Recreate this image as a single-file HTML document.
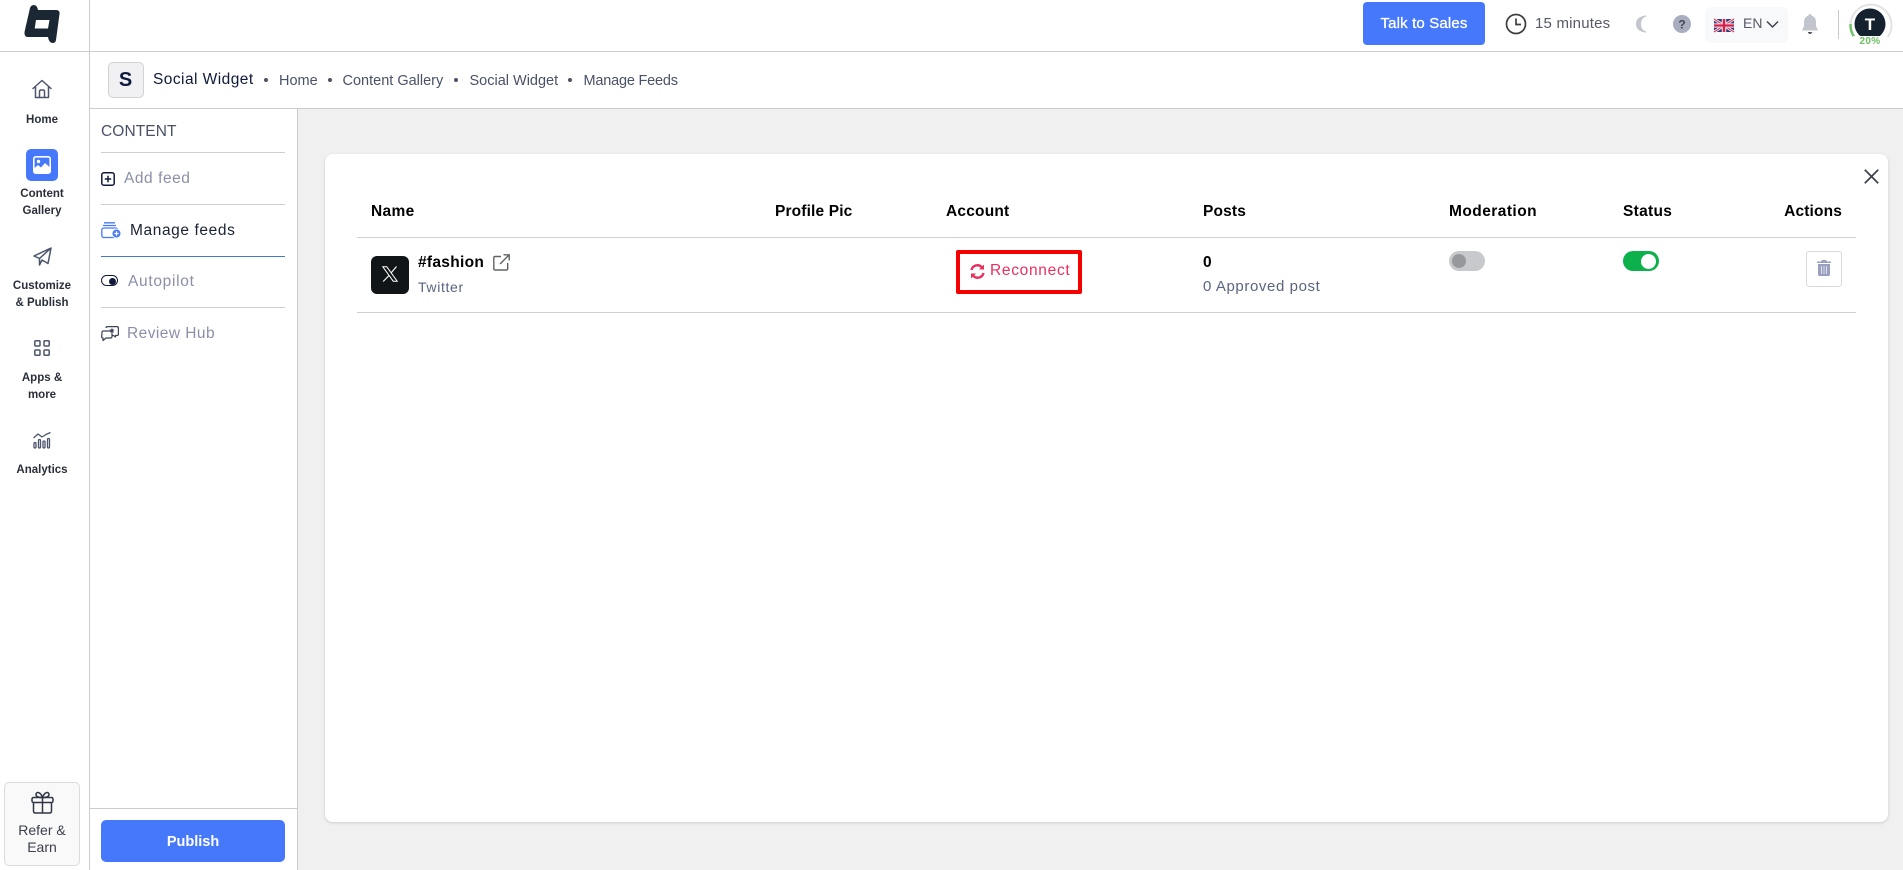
<!DOCTYPE html>
<html><head><meta charset="utf-8"><title>Manage Feeds</title>
<style>
html,body{margin:0;padding:0}
body{width:1903px;height:870px;position:relative;overflow:hidden;background:#f0f0f0;font-family:"Liberation Sans",sans-serif;color:#1a2233}
.a{position:absolute}
.t{position:absolute;white-space:nowrap;line-height:20px}
.c{text-align:center;transform:translateX(-50%)}
.s{font-size:11.5px;font-weight:700;color:#2a2f3a;letter-spacing:0}
.h{font-size:15.5px;font-weight:700;color:#000;letter-spacing:.15px}
.m{font-size:15.5px;color:#8b8fa8;letter-spacing:.55px}
.b{font-size:14.5px;color:#4a5168}
.d{width:4px;height:4px;border-radius:50%;background:#4a5168;position:absolute;top:78px}
.l{position:absolute;height:1px;background:#cfcfcf}
svg{position:absolute;overflow:visible}
</style></head><body>
<div class="a" style="left:0;top:0;width:1903px;height:52px;background:#fff"></div>
<div class="a" style="left:0;top:52px;width:89px;height:818px;background:#fff"></div>
<div class="a" style="left:89px;top:52px;width:1814px;height:56px;background:#fff"></div>
<div class="a" style="left:89px;top:108px;width:208px;height:762px;background:#fff"></div>
<div class="l" style="left:0;top:51px;width:1903px;background:#cccccc"></div>
<div class="a" style="left:89px;top:0;width:1px;height:870px;background:#cccccc"></div>
<div class="l" style="left:89px;top:108px;width:1814px;background:#cccccc"></div>
<div class="a" style="left:297px;top:108px;width:1px;height:762px;background:#cccccc"></div>

<svg style="left:0;top:0" width="89" height="51"><path fill="#1b2733" fill-rule="evenodd" d="M30 8Q31 5 34 5Q37 5 38 10H56Q60 10 59.500 14L56 40Q55.500 43 52.500 43Q49 43 48 37H28Q24 37 24.500 32ZM36 20H49.500L48 28.500H34.700Z"/></svg>

<svg style="left:32px;top:79px" width="20" height="20" viewBox="0 0 20 20" fill="none" stroke="#4b556b" stroke-width="1.500" stroke-linejoin="round" stroke-linecap="round"><path d="M1 9.500L10 1.500L19 9.500M3.500 8V18.500H16.500V8M7.500 18.500V12.500Q7.500 11 9 11H11Q12.500 11 12.500 12.500V18.500"/></svg>
<div class="t s c" style="left:42px;top:110px">Home</div>
<div class="a" style="left:26px;top:149px;width:32px;height:32px;border-radius:5px;background:#4678fb"></div>
<svg style="left:33px;top:156px" width="18" height="18" viewBox="0 0 18 18"><rect x=".8" y=".8" width="16.400" height="16.400" rx="2" fill="none" stroke="#fff" stroke-width="1.600"/><circle cx="5.500" cy="5.500" r="1.700" fill="#fff"/><path fill="#fff" d="M1 15V12.500L5 9L8 11.500L12 7L17 11.500V15Q17 17 15 17H3Q1 17 1 15Z"/></svg>
<div class="t s c" style="left:42px;top:184px">Content</div>
<div class="t s c" style="left:42px;top:201px">Gallery</div>
<svg style="left:33px;top:247px" width="19" height="19" viewBox="0 0 19 19" fill="none" stroke="#4b556b" stroke-width="1.500" stroke-linejoin="round"><path d="M18 1L1 9L6.500 11.500L18 1L15 16.500L9 13L6.500 18V11.500"/></svg>
<div class="t s c" style="left:42px;top:276px">Customize</div>
<div class="t s c" style="left:42px;top:293px">&amp; Publish</div>
<svg style="left:34px;top:340px" width="16" height="16" viewBox="0 0 16 16" fill="none" stroke="#4b556b" stroke-width="1.500"><rect x=".8" y=".8" width="5.200" height="5.200" rx="1"/><rect x="10" y=".8" width="5.200" height="5.200" rx="1"/><rect x=".8" y="10" width="5.200" height="5.200" rx="1"/><rect x="10" y="10" width="5.200" height="5.200" rx="1"/></svg>
<div class="t s c" style="left:42px;top:368px">Apps &amp;</div>
<div class="t s c" style="left:42px;top:385px">more</div>
<svg style="left:33px;top:432px" width="18" height="17" viewBox="0 0 18 17" fill="none" stroke="#4b556b" stroke-width="1.300" stroke-linejoin="round"><path d="M.5 6L5 2L9 5L13 2.500L17.500 .5"/><rect x="1" y="10.500" width="2" height="5.500" rx="1"/><rect x="5.500" y="7.500" width="2" height="8.500" rx="1"/><rect x="10" y="9" width="2" height="7" rx="1"/><rect x="14.500" y="6.500" width="2" height="9.500" rx="1"/></svg>
<div class="t s c" style="left:42px;top:460px">Analytics</div>

<div class="a" style="left:4px;top:782px;width:74px;height:82px;background:#f9f9f9;border:1px solid #dcdcdc;border-radius:5px"></div>
<svg style="left:31px;top:791px" width="23" height="23" viewBox="0 0 23 23" fill="none" stroke="#2f3747" stroke-width="1.500" stroke-linejoin="round"><rect x="1" y="6.500" width="21" height="5" rx="1.500"/><path d="M2.500 11.500V20Q2.500 22 4.500 22H18.500Q20.500 22 20.500 20V11.500M11.500 6.500V22M11.500 6.500C9 6.500 5 6 5 3.500C5 .5 9.500 .5 11.500 6.500C13.500 .5 18 .5 18 3.500C18 6 14 6.500 11.500 6.500Z"/></svg>
<div class="t c" style="left:42px;top:820px;font-size:14px;color:#3b3f4a">Refer &amp;</div>
<div class="t c" style="left:42px;top:837px;font-size:14px;color:#3b3f4a">Earn</div>

<div class="a" style="left:108px;top:62px;width:34px;height:34px;border:1px solid #d2d2d2;border-radius:5px;background:#f1f1f3"></div>
<div class="t c" style="left:125.500px;top:70px;font-size:20px;font-weight:700;color:#0e1a3c">S</div>
<div class="t" style="left:153px;top:70px;font-size:15.500px;color:#0f1a38;letter-spacing:.45px">Social Widget</div>
<div class="d" style="left:264px"></div>
<div class="t b" style="left:279px;top:71px">Home</div>
<div class="d" style="left:328px"></div>
<div class="t b" style="left:342.500px;top:71px">Content Gallery</div>
<div class="d" style="left:454px"></div>
<div class="t b" style="left:469.500px;top:71px">Social Widget</div>
<div class="d" style="left:568px"></div>
<div class="t b" style="left:583.500px;top:71px;letter-spacing:-.2px">Manage Feeds</div>

<div class="t" style="left:101px;top:122px;font-size:15.500px;color:#4a5168;letter-spacing:.1px">CONTENT</div>
<div class="l" style="left:101px;top:152px;width:184px"></div>
<svg style="left:101px;top:172px" width="14" height="14" viewBox="0 0 14 14" fill="none" stroke="#10193a" stroke-width="1.500"><rect x=".8" y=".8" width="12.400" height="12.400" rx="2"/><path d="M7 3.800V10.200M3.800 7H10.200"/></svg>
<div class="t m" style="left:124px;top:169px">Add feed</div>
<div class="l" style="left:101px;top:204px;width:184px"></div>
<svg style="left:101px;top:222px" width="21" height="17" viewBox="0 0 21 17" fill="none" stroke="#4678fb" stroke-width="1.300"><path d="M3 .8H14M2 3.500H15"/><rect x=".8" y="6" width="16" height="9.500" rx="2"/><circle cx="15.500" cy="11.500" r="4.500" fill="#4678fb" stroke="#fff" stroke-width="1"/><path d="M15.500 9.300V13.700M13.300 11.500H17.700" stroke="#fff"/></svg>
<div class="t" style="left:130px;top:221px;font-size:15.500px;color:#1a2233;letter-spacing:.6px">Manage feeds</div>
<div class="l" style="left:101px;top:256px;width:184px;background:#4678c8"></div>
<div class="a" style="left:101px;top:275px;width:15px;height:9px;border:1.500px solid #10193a;border-radius:6px"></div>
<div class="a" style="left:109px;top:277.500px;width:7px;height:7px;border-radius:50%;background:#10193a"></div>
<div class="t m" style="left:128px;top:272px;letter-spacing:.7px">Autopilot</div>
<div class="l" style="left:101px;top:307px;width:184px"></div>
<svg style="left:101px;top:326px" width="18" height="15" viewBox="0 0 18 15" fill="none" stroke="#3b4356" stroke-width="1.200" stroke-linejoin="round"><path d="M5 2Q5 .6 6.500 .6H16Q17.400 .6 17.400 2V8Q17.400 9.500 16 9.500H14.500V11L12.500 9.500H7"/><path d="M1 7Q.6 5 2.500 5H9.500Q11 5 11 6.500V10.500Q11 12 9.500 12H5L2 14.500V12Q.6 12 .6 10.500Z" fill="#fff"/><path d="M11 1.800L11.800 3.500L13.600 3.700L12.300 4.900L12.700 6.700L11 5.800L9.300 6.700L9.700 4.900L8.400 3.700L10.200 3.500Z" fill="#3b4356" stroke="none"/></svg>
<div class="t m" style="left:127px;top:324px;letter-spacing:.45px">Review Hub</div>
<div class="l" style="left:89px;top:808px;width:208px;background:#cccccc"></div>
<div class="a" style="left:101px;top:820px;width:184px;height:42px;border-radius:5px;background:#4678fb"></div>
<div class="t c" style="left:193px;top:832px;font-size:14.500px;font-weight:700;color:#fff">Publish</div>

<div class="a" style="left:1363px;top:2px;width:122px;height:43px;border-radius:4px;background:#4678fb"></div>
<div class="t c" style="left:1424px;top:14px;font-size:15px;color:#fff;letter-spacing:.15px;-webkit-text-stroke:.3px #fff">Talk to Sales</div>
<svg style="left:1505px;top:13px" width="22" height="22" viewBox="0 0 22 22" fill="none" stroke="#3d3d3d" stroke-width="1.700"><circle cx="11" cy="11" r="9.500"/><path d="M11 5.500V11.500H16"/></svg>
<div class="t" style="left:1535px;top:14px;font-size:15px;color:#555a66;letter-spacing:.2px">15 minutes</div>
<svg style="left:1635px;top:15px" width="14" height="18" viewBox="0 0 14 18"><path fill="#c4c7d0" d="M10 .5Q1 2 1 9Q1 16 10 17.500Q11 17.500 12 17Q6 15 6 9Q6 3 12 1Q11 .5 10 .5Z"/></svg>
<svg style="left:1673px;top:15px" width="18" height="18" viewBox="0 0 18 18"><circle cx="9" cy="9" r="9" fill="#a9aebf"/><text x="9" y="13.500" font-family="Liberation Sans" font-size="12" font-weight="700" fill="#3f4558" text-anchor="middle">?</text></svg>
<div class="a" style="left:1705px;top:7px;width:83px;height:36px;border-radius:6px;background:#f7f9fa"></div>
<svg style="left:1714px;top:19px" width="20" height="13" viewBox="0 0 20 14" preserveAspectRatio="none"><rect width="20" height="14" fill="#2b3a7a"/><path d="M0 0L20 14M20 0L0 14" stroke="#f2e6ea" stroke-width="3"/><path d="M0 0L20 14M20 0L0 14" stroke="#d8214a" stroke-width="1"/><path d="M10 0V14M0 7H20" stroke="#f2e6ea" stroke-width="4.500"/><path d="M10 0V14M0 7H20" stroke="#d8214a" stroke-width="2.500"/></svg>
<div class="t" style="left:1743px;top:13px;font-size:14px;color:#555a66">EN</div>
<svg style="left:1766px;top:20px" width="13" height="9" viewBox="0 0 13 9" fill="none" stroke="#3d4250" stroke-width="1.500"><path d="M1 1.500L6.500 7L12 1.500"/></svg>
<svg style="left:1802px;top:14px" width="16" height="21" viewBox="0 0 16 21"><path fill="#c2c5ce" d="M8 0Q9.500 0 9.500 1.500Q14 3 14 8V12L16 16.500H0L2 12V8Q2 3 6.500 1.500Q6.500 0 8 0Z"/><path fill="#4a4f60" d="M5.800 18H10.200Q9.500 20 8 20Q6.500 20 5.800 18Z"/></svg>
<div class="a" style="left:1838px;top:10px;width:1px;height:29px;background:#c9c9c9"></div>
<svg style="left:1846px;top:0" width="50" height="50" viewBox="0 0 50 50" fill="none"><path d="M8.300 37A20.500 20.500 0 1 1 41.700 37" stroke="#e3e3e3" stroke-width="2"/><path d="M8.300 37A20.500 20.500 0 0 1 4.500 24" stroke="#6fc267" stroke-width="2.500"/><circle cx="24" cy="24" r="15.500" fill="#162130"/><text x="24" y="30" font-family="Liberation Sans" font-size="17" font-weight="700" fill="#fff" text-anchor="middle">T</text></svg>
<div class="a" style="left:1853px;top:36px;width:34px;height:14px;background:#fff"></div>
<div class="t c" style="left:1870px;top:32px;font-size:10px;font-weight:700;color:#6cbf63;letter-spacing:.3px">20%</div>

<div class="a" style="left:325px;top:154px;width:1563px;height:668px;background:#fff;border-radius:8px;box-shadow:0 1px 3px rgba(0,0,0,.15)"></div>
<svg style="left:1864px;top:169px" width="15" height="15" viewBox="0 0 15 15" fill="none" stroke="#3f444f" stroke-width="1.800"><path d="M.8 .8L14.200 14.200M14.200 .8L.8 14.200"/></svg>

<div class="t h" style="left:371px;top:202px;letter-spacing:.35px">Name</div>
<div class="t h" style="left:775px;top:202px">Profile Pic</div>
<div class="t h" style="left:946px;top:202px;letter-spacing:.2px">Account</div>
<div class="t h" style="left:1203px;top:202px">Posts</div>
<div class="t h" style="left:1449px;top:202px;letter-spacing:.45px">Moderation</div>
<div class="t h" style="left:1623px;top:202px;letter-spacing:.3px">Status</div>
<div class="t h" style="right:61px;top:202px">Actions</div>
<div class="l" style="left:357px;top:237px;width:1499px"></div>
<div class="l" style="left:357px;top:312px;width:1499px"></div>

<div class="a" style="left:371px;top:256px;width:38px;height:38px;border-radius:6px;background:#111518"></div>
<svg style="left:382px;top:266px" width="16" height="16" viewBox="0 0 16 16" fill="none" stroke="#fff"><path d="M.8 .8H4.800L15.200 15.200H11.200Z" stroke-width="1"/><path d="M14.500 .5L9 7M7 9.500L1.200 15.500" stroke-width="1.100"/></svg>
<div class="t h" style="left:418px;top:253px;letter-spacing:.3px">#fashion</div>
<svg style="left:493px;top:254px" width="17" height="17" viewBox="0 0 17 17" fill="none" stroke="#5f6368" stroke-width="1.400"><path d="M8 2.500H2Q.8 2.500 .8 3.700V14.800Q.8 16 2 16H13.500Q14.700 16 14.700 14.800V9M7 10L16 1M10.500 .8H16.200V6.500"/></svg>
<div class="t" style="left:418px;top:277px;font-size:14px;color:#5a6480;letter-spacing:.65px">Twitter</div>

<div class="a" style="left:956px;top:250px;width:118px;height:36px;border:4px solid #f50000;border-radius:2px"></div>
<svg style="left:970px;top:264px" width="15" height="15" viewBox="0 0 15 15" fill="none" stroke="#e8305f" stroke-width="2.400"><path d="M1.500 6A6 6 0 0 1 12 3.500M13.500 9A6 6 0 0 1 3 11.500"/><path d="M14 .5V5.500H9L14 .5ZM1 14.500V9.500H6L1 14.500Z" fill="#e8305f" stroke="none"/></svg>
<div class="t" style="left:990px;top:261px;font-size:15.500px;color:#e8305f;letter-spacing:.7px">Reconnect</div>

<div class="t h" style="left:1203px;top:253px">0</div>
<div class="t" style="left:1203px;top:276.500px;font-size:15px;color:#5a6480;letter-spacing:.6px">0 Approved post</div>

<div class="a" style="left:1449px;top:251px;width:36px;height:20px;border-radius:10px;background:#c7c9cd"></div>
<div class="a" style="left:1452px;top:254px;width:14px;height:14px;border-radius:50%;background:#96989c"></div>
<div class="a" style="left:1623px;top:251px;width:36px;height:20px;border-radius:10px;background:#0db14b"></div>
<div class="a" style="left:1641px;top:253.500px;width:15px;height:15px;border-radius:50%;background:#fff"></div>

<div class="a" style="left:1806px;top:251px;width:34px;height:34px;border:1px solid #d9d9d9;border-radius:3px;background:#fff"></div>
<svg style="left:1817px;top:260px" width="14" height="16" viewBox="0 0 14 16"><path fill="#9a9fc0" d="M5 0H9L10 1.500H14V3H0V1.500H4ZM1 4H13V14.500Q13 16 11.500 16H2.500Q1 16 1 14.500Z"/><path stroke="#dfe0ea" stroke-width="1" d="M4.500 6V14M7 6V14M9.500 6V14"/></svg>
</body></html>
